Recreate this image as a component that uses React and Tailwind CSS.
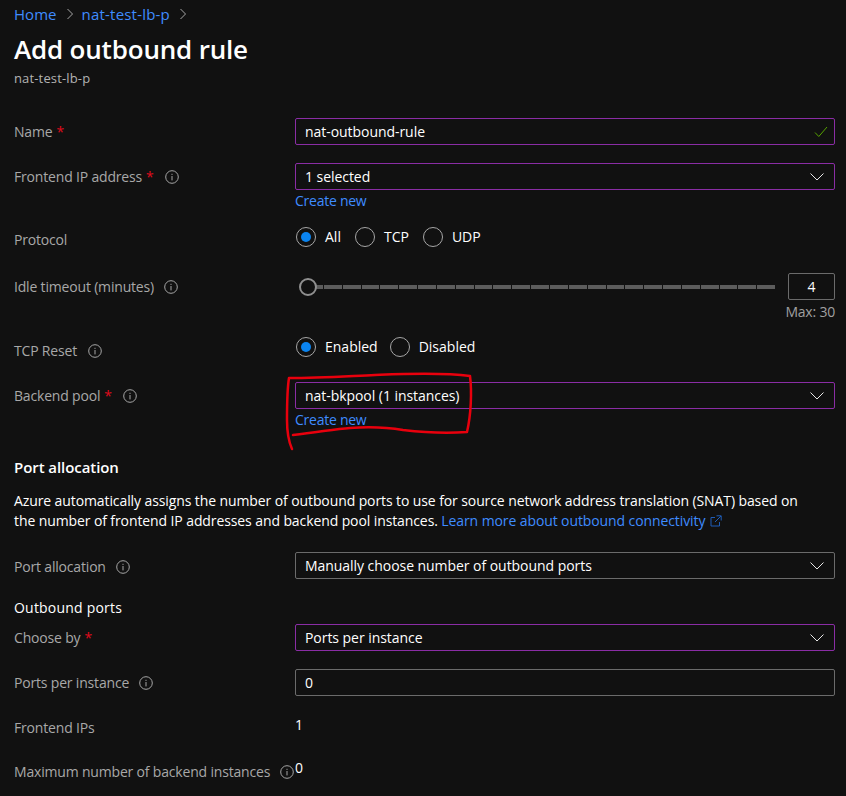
const FONT = "font-['Open_Sans','Noto_Sans',sans-serif]";

const Info = ({ className = "" }) => (
  <svg width="14" height="14" viewBox="0 0 14 14" fill="none" className={`shrink-0 ${className}`}>
    <circle cx="7" cy="7" r="6.3" stroke="#a6a6a6" strokeWidth="1" />
    <rect x="6.5" y="6" width="1" height="4.4" fill="#a6a6a6" />
    <rect x="6.5" y="3.8" width="1" height="1.1" fill="#a6a6a6" />
  </svg>
);

const Chevron = () => (
  <svg width="16" height="10" viewBox="0 0 16 10" fill="none" className="shrink-0">
    <path d="M1.5 1.5 L8 8 L14.5 1.5" stroke="#e6e6e6" strokeWidth="1" />
  </svg>
);

const Label = ({ text, required, info, gap = "ml-[11px]" }) => (
  <div className="w-[281px] shrink-0 flex items-center h-5 text-[#a8a8a8] tracking-[-0.18px]">
    <span>{text}</span>
    {required && <span className="text-[#e00b1c] ml-1">*</span>}
    {info && <Info className={gap} />}
  </div>
);

const Field = ({ value, active, chevron, check }) => (
  <div className={`h-[27px] flex items-center justify-between pl-[9px] ${check ? "pr-[6px]" : "pr-[9px]"} rounded-[2px] border ${active ? "border-[#8a2da5]" : "border-[#6b6b6b]"}`}>
    <span className="text-white tracking-[-0.05px]">{value}</span>
    {chevron && <Chevron />}
    {check && (
      <svg width="14" height="12" viewBox="0 0 14 12" fill="none">
        <path d="M1 6.5 L4.8 10.5 L13 1" stroke="#57a300" strokeWidth="1" />
      </svg>
    )}
  </div>
);

const Radio = ({ label, checked, className = "mr-[14px]" }) => (
  <div className={`flex items-center gap-[9px] ${className}`}>
    <span className="w-5 h-5 rounded-full border border-[#a6a6a6] flex items-center justify-center">
      {checked && <span className="w-[10px] h-[10px] rounded-full bg-[#0a84f0]" />}
    </span>
    <span className="text-white">{label}</span>
  </div>
);

const CreateNew = () => (
  <div className="text-[#3f8cff] h-5 mt-[1px] leading-5 tracking-[-0.25px]">Create new</div>
);

const Slider = () => (
  <div className="flex-1 relative flex items-center h-4">
    <div className="flex-1 ml-[10px] flex gap-[1px] h-1">
      {Array.from({ length: 25 }).map((_, i) => (
        <div key={i} className="flex-1 bg-[#5c5c5c]" />
      ))}
    </div>
    <span className="absolute left-[4px] -top-[1px] w-[18px] h-[18px] rounded-full border-2 border-[#8f8f8f] bg-[#111111]" />
  </div>
);

export default function App() {
  return (
    <div className={`${FONT} relative w-[846px] h-[796px] overflow-hidden bg-[#111111] pl-[14px] pr-[11px] text-[14px] leading-5`}>
      {/* breadcrumb */}
      <div className="flex items-center h-5 mt-[4px] text-[15px] tracking-[0.05px] text-[#3f8cff]">
        <span>Home</span>
        <svg width="8" height="12" viewBox="0 0 8 12" fill="none" className="ml-[9px] mr-[8px]">
          <path d="M1.5 1 L6.5 6 L1.5 11" stroke="#a6a6a6" strokeWidth="1" />
        </svg>
        <span className="tracking-[0.2px]">nat-test-lb-p</span>
        <svg width="8" height="12" viewBox="0 0 8 12" fill="none" className="ml-[9px]">
          <path d="M1.5 1 L6.5 6 L1.5 11" stroke="#a6a6a6" strokeWidth="1" />
        </svg>
      </div>

      <h1 className="text-white font-semibold text-[26px] leading-8 mt-[9px] tracking-[-0.18px]">Add outbound rule</h1>
      <div className="text-[#b3b3b3] text-[13px] leading-4 mt-[5px] tracking-[0.15px]">nat-test-lb-p</div>

      <div className="flex items-start mt-[32px]">
        <div className="pt-1"><Label text="Name" required /></div>
        <div className="flex-1"><Field value="nat-outbound-rule" active check /></div>
      </div>

      <div className="flex items-start mt-[18px]">
        <div className="pt-1"><Label text="Frontend IP address" required info /></div>
        <div className="flex-1">
          <Field value="1 selected" active chevron />
          <CreateNew />
        </div>
      </div>

      <div className="flex items-center mt-[13px]">
        <div className="pt-[6px]"><Label text="Protocol" /></div>
        <div className="flex ml-[1px]"><Radio label="All" checked /><Radio label="TCP" /><Radio label="UDP" /></div>
      </div>

      <div className="flex items-start mt-[23px]">
        <div className="pt-1"><Label text="Idle timeout (minutes)" info gap="ml-[10px]" /></div>
        <div className="flex-1">
          <div className="flex items-center gap-[13px]">
            <Slider />
            <div className="w-[47px] h-[27px] border border-[#6b6b6b] rounded-[2px] flex items-center justify-center text-white">4</div>
          </div>
          <div className="text-right text-[#a0a0a0] leading-4 mt-[4px] tracking-[-0.2px]">Max: 30</div>
        </div>
      </div>

      <div className="flex items-center mt-[13px]">
        <div className="pt-2"><Label text="TCP Reset" info /></div>
        <div className="flex ml-[1px]"><Radio label="Enabled" checked className="mr-[12px]" /><Radio label="Disabled" /></div>
      </div>

      <div className="flex items-start mt-[21px]">
        <div className="pt-1"><Label text="Backend pool" required info /></div>
        <div className="flex-1">
          <Field value="nat-bkpool (1 instances)" active chevron />
          <CreateNew />
        </div>
      </div>

      <div className="text-white font-semibold text-[15px] mt-[27px] tracking-[-0.07px]">Port allocation</div>
      <p className="text-white mt-[14px] tracking-[-0.1px]">
        Azure automatically assigns the number of outbound ports to use for source network address translation (SNAT) based on
        <br />
        the number of frontend IP addresses and backend pool instances.{" "}
        <span className="text-[#3f8cff]">Learn more about outbound connectivity</span>
        <svg width="12" height="12" viewBox="0 0 12 12" fill="none" className="inline-block ml-[5px] align-[-1px]">
          <path d="M5 2.5 H1 V11 H9.5 V7 M6.5 0.8 H11.2 V5.5 M11 1 L5 7" stroke="#1f5db8" strokeWidth="1" />
        </svg>
      </p>

      <div className="flex items-start mt-[21px]">
        <div className="pt-[5px]"><Label text="Port allocation" info gap="ml-[10px]" /></div>
        <div className="flex-1"><Field value="Manually choose number of outbound ports" chevron /></div>
      </div>

      <div className="text-white mt-[19px] tracking-[0.2px]">Outbound ports</div>

      <div className="flex items-start mt-[6px]">
        <div className="pt-1"><Label text="Choose by" required /></div>
        <div className="flex-1"><Field value="Ports per instance" active chevron /></div>
      </div>

      <div className="flex items-start mt-[18px]">
        <div className="pt-1"><Label text="Ports per instance" info gap="ml-[10px]" /></div>
        <div className="flex-1"><Field value="0" /></div>
      </div>

      <div className="flex items-start mt-[19px]">
        <div className="pt-[3px]"><Label text="Frontend IPs" /></div>
        <div className="text-white">1</div>
      </div>

      <div className="flex items-start mt-[20px]">
        <div className="pt-1"><Label text="Maximum number of backend instances" info gap="ml-[10px]" /></div>
        <div className="text-white">0</div>
      </div>

      {/* red marker annotation */}
      <svg width="846" height="796" viewBox="0 0 846 796" fill="none" className="absolute inset-0 pointer-events-none">
        <path
          d="M292 449 C288 440 287 432 287 420 C287 405 287 390 289 378 C320 378 350 376 375 375 C400 374 440 372 470 376 C472 392 471 415 467 432 C440 434 420 432 403 430 C385 427 365 427 350 428 C335 429 320 432 293 435"
          stroke="#e8000d"
          strokeWidth="2.5"
          strokeLinecap="round"
          strokeLinejoin="round"
        />
      </svg>
    </div>
  );
}
